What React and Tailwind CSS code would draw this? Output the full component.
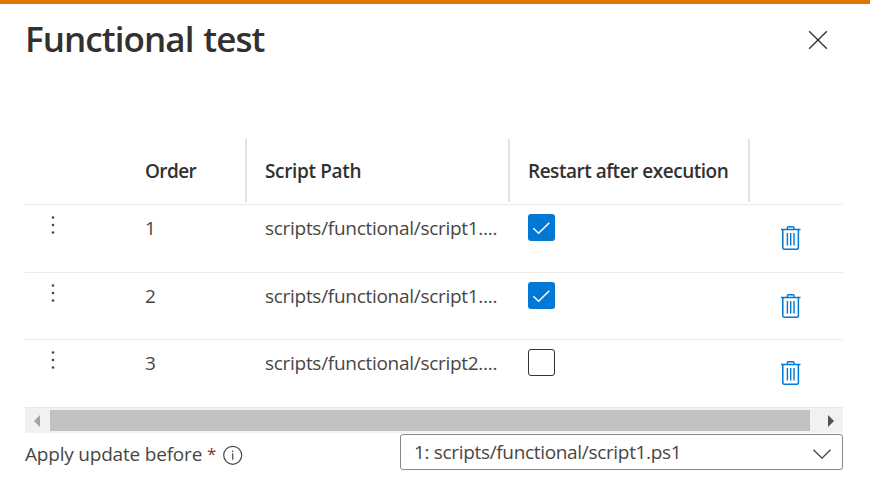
import React from 'react';

const rows = [
  { order: 1, path: 'scripts/functional/script1....', restart: true, height: 'h-[68px]' },
  { order: 2, path: 'scripts/functional/script1....', restart: true, height: 'h-[67px]' },
  { order: 3, path: 'scripts/functional/script2....', restart: false, height: 'h-[68px]' },
];

const columns = 'grid grid-cols-[120px_102px_263px_240px_93px]';

function CloseIcon() {
  return (
    <svg className="h-[20px] w-[20px]" viewBox="0 0 20 20" fill="none" stroke="#323130" strokeWidth="1.35">
      <path d="M1.2 1.2 18.8 18.8M18.8 1.2 1.2 18.8" />
    </svg>
  );
}

function TrashIcon() {
  return (
    <svg className="h-[24px] w-[20px]" viewBox="0 0 20 24" fill="none" stroke="#0078d4">
      <path d="M0 3.5H19.5" strokeWidth="1.5" />
      <path d="M6.4 3.5V1.6Q6.4.8 7.2.8H12.2Q13 .8 13 1.6V3.5" strokeWidth="1.4" />
      <path d="M1.8 3.5V21.7Q1.8 23.2 3.3 23.2H15.9Q17.4 23.2 17.4 21.7V3.5" strokeWidth="1.5" />
      <path d="M6.4 7V19.5M9.7 7V19.5M13 7V19.5" strokeWidth="1.4" />
    </svg>
  );
}

function Checkbox({ checked }) {
  if (!checked) {
    return <div className="h-[27px] w-[27px] rounded-[3px] border border-[#323130] bg-white" />;
  }
  return (
    <div className="h-[27px] w-[27px] rounded-[3px] bg-[#0078d4]">
      <svg className="h-[27px] w-[27px]" viewBox="0 0 27 27" fill="none" stroke="#fff" strokeWidth="1.5">
        <path d="M5.3 14.2 10.6 19.3 21.3 8.7" />
      </svg>
    </div>
  );
}

function Header() {
  return (
    <div className={`${columns} h-[66px] w-[818px] pt-px text-[19px] leading-[64px] font-[550] text-[#323130]`}>
      <div />
      <div className="h-[63px] border-r-2 border-[#dfe3e8]">
        <span className="tracking-[-0.6px]">Order</span>
      </div>
      <div className="h-[63px] border-r-2 border-[#dfe3e8] pl-[18px]">
        <span className="tracking-[-0.35px]">Script Path</span>
      </div>
      <div className="h-[63px] border-r-2 border-[#dfe3e8] pl-[18px] whitespace-nowrap">
        <span className="tracking-[-0.48px]">Restart after execution</span>
      </div>
      <div />
    </div>
  );
}

function Row({ row }) {
  return (
    <div className={`${columns} ${row.height} w-[818px] border-t border-[#edebe9] text-[19px] leading-[26px] text-[#484644]`}>
      <div className="pt-[10px] pl-[26px]">
        <svg className="h-[20px] w-[4px]" viewBox="0 0 4 20" fill="#484644">
          <circle cx="2" cy="2.5" r="1.3" />
          <circle cx="2" cy="10" r="1.3" />
          <circle cx="2" cy="17.5" r="1.3" />
        </svg>
      </div>
      <div className="pt-[10px]">{row.order}</div>
      <div className="pt-[10px] pl-[18px] whitespace-nowrap">
        <span className="tracking-[-0.29px]">{row.path}</span>
      </div>
      <div className="pt-[9px] pl-[18px]">
        <Checkbox checked={row.restart} />
      </div>
      <div className="pt-[21px] pl-[31px]">
        <TrashIcon />
      </div>
    </div>
  );
}

export default function App() {
  return (
    <div className="h-[487px] w-[870px] overflow-hidden border-t-4 border-[#dd7700] bg-white font-['Open_Sans','Noto_Sans',sans-serif]">
      <div className="flex h-[134px] justify-between pr-[42px] pl-[25px]">
        <h1 className="pt-[10px] text-[35px] leading-[50px] font-[580] whitespace-nowrap text-[#323130]">
          <span className="tracking-[-0.92px] [word-spacing:1.5px]">Functional test</span>
        </h1>
        <button className="flex h-[20px] pt-[26px]" aria-label="Close">
          <CloseIcon />
        </button>
      </div>
      <div className="pl-[25px]">
        <Header />
        {rows.map((row) => (
          <Row key={row.order} row={row} />
        ))}
        <div className="flex h-[26px] w-[818px] items-center border-t border-[#e8e8e8] bg-[#f1f1f1]">
          <div className="w-[25px] pl-[9px]">
            <svg className="h-[12px] w-[6px]" viewBox="0 0 6 12" fill="#a3a3a3">
              <path d="M6 0V12L0 6Z" />
            </svg>
          </div>
          <div className="h-[21px] w-[760px] bg-[#c1c1c1]" />
          <div className="pl-[18px]">
            <svg className="h-[12px] w-[6px]" viewBox="0 0 6 12" fill="#505050">
              <path d="M0 0V12L6 6Z" />
            </svg>
          </div>
        </div>
        <div className="flex w-[818px] pt-px text-[19px] text-[#484644]">
          <div className="flex w-[375px] pt-[7px] leading-[26px] whitespace-nowrap">
            <span className="w-[182px] tracking-[-0.2px]">Apply update before</span>
            <span className="w-[16px] text-[17px] text-[#a4262c]">*</span>
            <svg className="mt-[4px] h-[20px] w-[20px]" viewBox="0 0 20 20" fill="none" stroke="#484644" strokeWidth="1.2">
              <circle cx="9.7" cy="10.3" r="9" />
              <path d="M9.7 8.3V14.8M9.7 5.5V7" />
            </svg>
          </div>
          <div className="flex h-[36px] w-[443px] items-center justify-between rounded-[3px] border border-[#8a8886] pr-[11px] pl-[13px]">
            <span className="leading-[34px] tracking-[-0.33px]">1: scripts/functional/script1.ps1</span>
            <svg className="mt-[3px] h-[10px] w-[18px]" viewBox="0 0 18 10" fill="none" stroke="#484644" strokeWidth="1.3">
              <path d="M.5.7 9 9.2 17.5.7" />
            </svg>
          </div>
        </div>
      </div>
    </div>
  );
}
